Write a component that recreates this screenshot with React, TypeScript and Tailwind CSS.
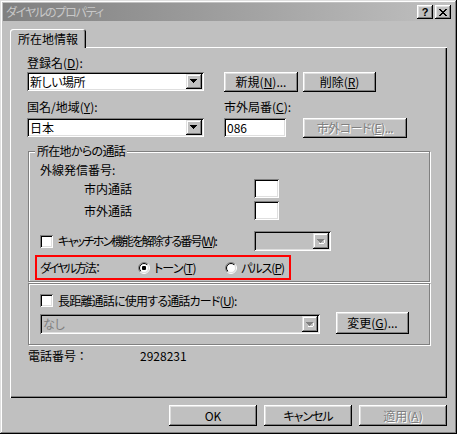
import React from "react";

function Btn({
  children,
  className = "",
  disabled = false,
}: {
  children: React.ReactNode;
  className?: string;
  disabled?: boolean;
}) {
  return (
    <div
      className={
        "shrink-0 flex items-center justify-center bg-[#c0c0c0] shadow-[inset_-1px_-1px_#000,inset_1px_1px_#fff,inset_-2px_-2px_#808080,inset_2px_2px_#dfdfdf] " +
        (disabled ? "text-[#808080] [text-shadow:1px_1px_#fff] " : "") +
        className
      }
    >
      {children}
    </div>
  );
}

function Arrow({ disabled = false }: { disabled?: boolean }) {
  return (
    <div className="w-[16px] h-full flex items-center justify-center bg-[#c0c0c0] shadow-[inset_-1px_-1px_#000,inset_1px_1px_#dfdfdf,inset_-2px_-2px_#808080,inset_2px_2px_#fff]">
      <svg width="8" height="5" viewBox="0 0 8 5" shapeRendering="crispEdges">
        {disabled && <path d="M2 4h5v1H2z M7 1h1v3H7z" fill="#fff" />}
        <path
          d="M0 0h7v1H0z M1 1h5v1H1z M2 2h3v1H2z M3 3h1v1H3z"
          fill={disabled ? "#808080" : "#000"}
        />
      </svg>
    </div>
  );
}

function Combo({
  value,
  className = "",
  disabled = false,
}: {
  value?: string;
  className?: string;
  disabled?: boolean;
}) {
  return (
    <div
      className={
        "shrink-0 flex p-[2px] shadow-[inset_1px_1px_#808080,inset_-1px_-1px_#fff,inset_2px_2px_#000,inset_-2px_-2px_#dfdfdf] " +
        (disabled ? "bg-[#c0c0c0] " : "bg-white ") +
        className
      }
    >
      <div
        className={
          "flex-1 flex items-center pl-[1px] " +
          (disabled ? "text-[#808080]" : "")
        }
      >
        {value}
      </div>
      <Arrow disabled={disabled} />
    </div>
  );
}

function Field({
  value,
  className = "",
}: {
  value?: string;
  className?: string;
}) {
  return (
    <div
      className={
        "shrink-0 flex items-center pl-[3px] bg-white shadow-[inset_1px_1px_#808080,inset_-1px_-1px_#fff,inset_2px_2px_#000,inset_-2px_-2px_#dfdfdf] " +
        className
      }
    >
      {value}
    </div>
  );
}

function Check() {
  return (
    <div className="shrink-0 w-[13px] h-[13px] bg-white shadow-[inset_1px_1px_#808080,inset_-1px_-1px_#fff,inset_2px_2px_#000,inset_-2px_-2px_#dfdfdf]" />
  );
}

function Radio({ checked = false }: { checked?: boolean }) {
  return (
    <svg width="12" height="12" viewBox="0 0 12 12" className="shrink-0">
      <defs>
        <linearGradient id="ro" x1="0" y1="0" x2="1" y2="1">
          <stop offset="0.5" stopColor="#808080" />
          <stop offset="0.5" stopColor="#fff" />
        </linearGradient>
        <linearGradient id="ri" x1="0" y1="0" x2="1" y2="1">
          <stop offset="0.5" stopColor="#000" />
          <stop offset="0.5" stopColor="#dfdfdf" />
        </linearGradient>
      </defs>
      <circle cx="6" cy="6" r="5.5" fill="none" stroke="url(#ro)" strokeWidth="1" />
      <circle cx="6" cy="6" r="4.5" fill="#fff" stroke="url(#ri)" strokeWidth="1" />
      {checked && <rect x="4" y="4" width="4" height="4" rx="1" fill="#000" />}
    </svg>
  );
}

export default function App() {
  return (
    <div className="w-[457px] h-[434px] bg-[#c0c0c0] p-[3px] flex flex-col whitespace-nowrap text-[12px] leading-[12px] text-black [font-family:'Noto_Sans_CJK_JP',sans-serif] [font-feature-settings:'palt'] shadow-[inset_-1px_-1px_#000,inset_1px_1px_#dfdfdf,inset_-2px_-2px_#808080,inset_2px_2px_#fff]">
      {/* Title bar */}
      <div className="h-[18px] flex items-center bg-linear-to-r from-[#808080] to-[#c0c0c0] pl-[3px] pr-[3px]">
        <span className="flex-1 text-[#c8c8c8] tracking-[-1.2px]">ダイヤルのプロパティ</span>
        <Btn className="w-[16px] h-[14px] font-bold text-[11px] [font-family:'Liberation_Sans',sans-serif]">
          ?
        </Btn>
        <Btn className="w-[16px] h-[14px] ml-[2px]">
          <svg width="8" height="7" viewBox="0 0 8 7" shapeRendering="crispEdges">
            <path
              d="M0 0h2v1H0z M6 0h2v1H6z M1 1h2v1H1z M5 1h2v1H5z M2 2h4v1H2z M3 3h2v1H3z M2 4h4v1H2z M1 5h2v1H1z M5 5h2v1H5z M0 6h2v1H0z M6 6h2v1H6z"
              fill="#000"
            />
          </svg>
        </Btn>
      </div>

      {/* Body */}
      <div className="ml-[7px] mt-[8px] w-[437px] flex flex-col">
        {/* Tab */}
        <div className="relative z-10 w-[76px] h-[19px] flex items-center justify-center bg-[#c0c0c0] rounded-t-[3px] shadow-[inset_1px_1px_#fff,inset_-1px_0_#000,inset_-2px_0_#808080]">
          所在地情報
        </div>

        {/* Panel */}
        <div className="-mt-[1px] h-[351px] flex flex-col shadow-[inset_1px_1px_#fff,inset_-1px_-1px_#000,inset_-2px_-2px_#808080]">
          <div className="ml-[17px] mt-[10px]">
            登録名(<u>D</u>):
          </div>
          <div className="ml-[17px] mt-[3px] flex">
            <Combo value="新しい場所" className="w-[177px] h-[19px] tracking-[-0.5px]" />
            <Btn className="ml-[20px] w-[74px] h-[20px]">
              新規(<u>N</u>)...
            </Btn>
            <Btn className="ml-[5px] w-[73px] h-[20px]">
              削除(<u>R</u>)
            </Btn>
          </div>

          <div className="ml-[17px] mt-[9px] flex">
            <div className="w-[197px] shrink-0">
              国名/地域(<u>Y</u>):
            </div>
            <div>
              市外局番(<u>C</u>):
            </div>
          </div>
          <div className="ml-[17px] mt-[5px] flex">
            <Combo value="日本" className="w-[177px] h-[19px]" />
            <Field value="086" className="ml-[20px] w-[62px] h-[19px]" />
            <Btn disabled className="ml-[17px] w-[104px] h-[20px] tracking-[-0.5px]">
              市外コード(<u>E</u>)...
            </Btn>
          </div>

          {/* Group: calls from location */}
          <div className="relative ml-[18px] mt-[13px] w-[402px] h-[131px] flex flex-col border border-[#808080] shadow-[1px_1px_#fff,inset_1px_1px_#fff]">
            <div className="absolute -top-[7px] left-[6px] px-[2px] bg-[#c0c0c0] tracking-[-0.7px]">
              所在地からの通話
            </div>
            <div className="ml-[11px] mt-[12px]">外線発信番号:</div>
            <div className="ml-[55px] mt-[3px] flex items-center">
              <div className="w-[170px] shrink-0">市内通話</div>
              <Field className="w-[25px] h-[19px]" />
            </div>
            <div className="ml-[55px] mt-[3px] flex items-center">
              <div className="w-[170px] shrink-0">市外通話</div>
              <Field className="w-[25px] h-[19px]" />
            </div>
            <div className="ml-[11px] mt-[11px] flex items-center">
              <div className="w-[214px] shrink-0 flex items-center">
                <Check />
                <span className="ml-[5px] tracking-[-1.7px]">
                  キャッチホン機能を解除する番号(<u>W</u>):
                </span>
              </div>
              <Combo disabled className="w-[77px] h-[20px]" />
            </div>
            <div className="ml-[6px] mt-[4px] w-[256px] h-[25px] flex items-center border-2 border-[#ff0000]">
              <div className="ml-[3px] w-[98px] shrink-0 tracking-[-2.2px]">ダイヤル方法 ：</div>
              <div className="w-[87px] shrink-0 flex items-center">
                <Radio checked />
                <span className="ml-[4px] tracking-[-0.8px]">
                  トーン(<u>T</u>)
                </span>
              </div>
              <div className="flex items-center">
                <Radio />
                <span className="ml-[4px] tracking-[-1px]">
                  パルス(<u>P</u>)
                </span>
              </div>
            </div>
          </div>

          {/* Group: calling card */}
          <div className="ml-[18px] mt-[1px] w-[402px] h-[62px] flex flex-col border border-[#808080] shadow-[1px_1px_#fff,inset_1px_1px_#fff]">
            <div className="ml-[11px] mt-[10px] flex items-center">
              <Check />
              <span className="ml-[5px] tracking-[-0.8px]">
                長距離通話に使用する通話カード(<u>U</u>):
              </span>
            </div>
            <div className="ml-[11px] mt-[5px] flex items-end">
              <Combo disabled value="なし" className="w-[280px] h-[20px]" />
              <Btn className="ml-[16px] w-[73px] h-[22px]">
                変更(<u>G</u>)...
              </Btn>
            </div>
          </div>

          <div className="ml-[18px] mt-[5px] flex">
            <div className="w-[112px] shrink-0">電話番号 ：</div>
            <div>2928231</div>
          </div>
        </div>

        {/* Dialog buttons */}
        <div className="mt-[7px] flex justify-end gap-[7px]">
          <Btn className="w-[88px] h-[21px]">OK</Btn>
          <Btn className="w-[88px] h-[21px] tracking-[-1px]">キャンセル</Btn>
          <Btn disabled className="w-[88px] h-[21px]">
            適用(<u>A</u>)
          </Btn>
        </div>
      </div>
    </div>
  );
}
